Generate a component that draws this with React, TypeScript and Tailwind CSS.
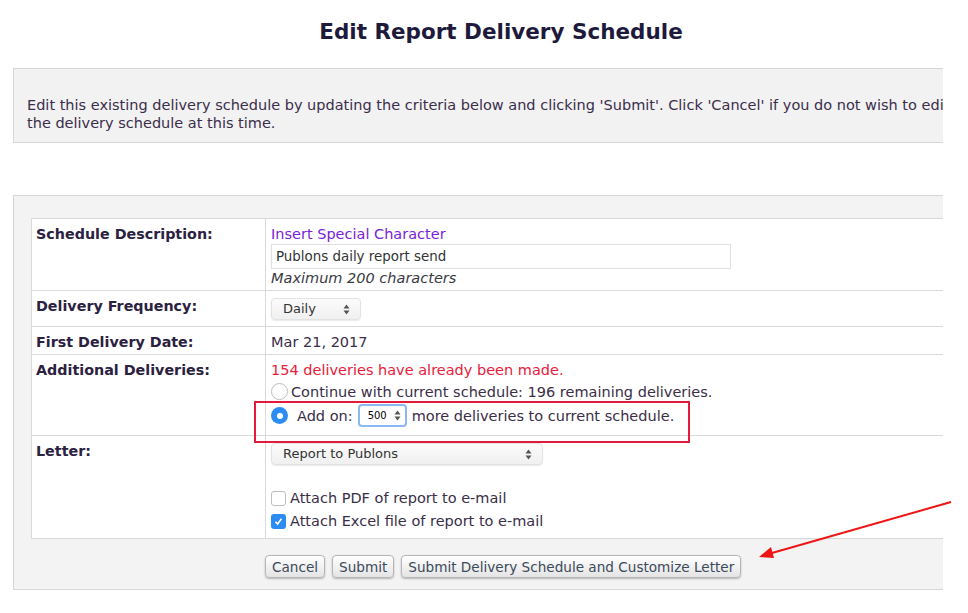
import React from 'react'

const font = { fontFamily: '"DejaVu Sans", Verdana, sans-serif' }

function UpDown() {
  return (
    <svg width="7" height="11" viewBox="0 0 7 11" className="shrink-0">
      <path d="M3.5 0.5 L6.5 4.5 L0.5 4.5 Z" fill="#555" />
      <path d="M3.5 10.5 L6.5 6.5 L0.5 6.5 Z" fill="#555" />
    </svg>
  )
}

function FakeSelect({ label, width }: { label: string; width: string }) {
  return (
    <div
      className={`flex h-[22px] items-center justify-between rounded-[4px] border border-[#e2e2e2] bg-gradient-to-b from-[#fbfbfb] to-[#f0f0f0] pl-[11px] pr-[10px] text-[13px] text-[#333] shadow-[0_1px_1px_rgb(0_0_0_/_0.08)] ${width}`}
    >
      <span>{label}</span>
      <UpDown />
    </div>
  )
}

function Row({
  label,
  children,
  className,
}: {
  label: string
  children: React.ReactNode
  className: string
}) {
  return (
    <div className={`grid grid-cols-[234px_1fr] border-b border-[#d9d9d9] last:border-b-0 ${className}`}>
      <div className="border-r border-[#d9d9d9] pl-[4px] pt-[7px] text-[14.3px] font-bold leading-[16px] text-[#2b2140]">
        {label}
      </div>
      <div className="pl-[5px] pt-[7px] text-[14.5px] leading-[16px] text-[#3a2e48]">{children}</div>
    </div>
  )
}

export default function App() {
  return (
    <div className="relative h-[613px] w-[968px] overflow-hidden bg-white" style={font}>
      <h1 className="w-[1002px] pt-[19px] text-center text-[21.5px] font-bold leading-[26px] text-[#1e1a3c]">
        Edit Report Delivery Schedule
      </h1>

      <div className="ml-[13px] mt-[23px] w-[930px] overflow-hidden">
        <div className="h-[75px] w-[1000px] border border-[#d6d6d6] bg-[#f2f2f2] pl-[13px] pt-[27px] text-[14.5px] leading-[18px] text-[#3b2d4c]">
          <p className="whitespace-nowrap">
            Edit this existing delivery schedule by updating the criteria below and clicking 'Submit'. Click 'Cancel' if you do not wish to edit
          </p>
          <p>the delivery schedule at this time.</p>
        </div>

        <div className="mt-[52px] h-[395px] w-[1000px] border border-[#d6d6d6] bg-[#f3f3f3] pl-[17px] pt-[22px]">
          <div className="border border-[#d9d9d9] bg-white">
            <Row label="Schedule Description:" className="h-[72px]">
              <div className="text-[#7a22d9]">Insert Special Character</div>
              <div className="mt-[2px] flex h-[25px] w-[460px] items-center border border-[#e0e0e0] pl-[4px] text-[13.4px] text-[#333]">
                Publons daily report send
              </div>
              <div className="mt-[1px] italic text-[#3a3a44]">Maximum 200 characters</div>
            </Row>
            <Row label="Delivery Frequency:" className="h-[36px]">
              <FakeSelect label="Daily" width="w-[90px]" />
            </Row>
            <Row label="First Delivery Date:" className="h-[28px]">
              <span>Mar 21, 2017</span>
            </Row>
            <Row label="Additional Deliveries:" className="h-[81px]">
              <div className="text-[#e8203a]">154 deliveries have already been made.</div>
              <div className="mt-[5px] flex items-center gap-[3px]">
                <span className="h-[17px] w-[17px] rounded-full border border-[#bdbdbd] bg-white" />
                <span>Continue with current schedule: 196 remaining deliveries.</span>
              </div>
              <div className="mt-[4px] flex items-center">
                <span className="flex h-[17px] w-[17px] items-center justify-center rounded-full bg-[#2d8cf2]">
                  <span className="h-[6px] w-[6px] rounded-full bg-white" />
                </span>
                <span className="ml-[9px]">Add on:</span>
                <span className="ml-[5px] flex h-[23px] w-[49px] items-center justify-between rounded-[4px] border-2 border-[#8ab8f2] bg-white pl-[8px] pr-[4px] text-[10px] text-black">
                  500
                  <UpDown />
                </span>
                <span className="ml-[5px]">more deliveries to current schedule.</span>
              </div>
            </Row>
            <Row label="Letter:" className="h-[102px]">
              <FakeSelect label="Report to Publons" width="w-[272px]" />
              <div className="mt-[25px] flex items-center gap-[4px]">
                <span className="h-[15px] w-[15px] rounded-[3px] border border-[#bdbdbd] bg-white" />
                <span>Attach PDF of report to e-mail</span>
              </div>
              <div className="mt-[7px] flex items-center gap-[4px]">
                <span className="flex h-[15px] w-[15px] items-center justify-center rounded-[3px] bg-[#2d8cf2]">
                  <svg width="9" height="9" viewBox="0 0 9 9">
                    <path d="M1.5 4.8 L3.6 7 L7.5 1.8" fill="none" stroke="white" strokeWidth="1.6" />
                  </svg>
                </span>
                <span>Attach Excel file of report to e-mail</span>
              </div>
            </Row>
          </div>

          <div className="mt-[16px] flex gap-[7px] pl-[234px] text-[13.6px] text-[#3b4a5c]">
            {['Cancel', 'Submit', 'Submit Delivery Schedule and Customize Letter'].map((b) => (
              <button
                key={b}
                className="h-[23px] rounded-[4px] border border-[#b5b5b5] bg-gradient-to-b from-white to-[#e4e4e4] px-[6px] leading-[20px] shadow-[0_1px_2px_rgb(0_0_0_/_0.25)]"
              >
                {b}
              </button>
            ))}
          </div>
        </div>
      </div>

      {/* annotation box around Add on row */}
      <div className="absolute left-[254px] top-[401px] h-[42px] w-[436px] border-2 border-[#e5193a]" />

      {/* annotation arrow */}
      <svg className="absolute left-0 top-0" width="968" height="613">
        <line x1="951" y1="502" x2="772" y2="553" stroke="#f01515" strokeWidth="2" />
        <path d="M759 557 L771 547 L774 558 Z" fill="#f01515" />
      </svg>
    </div>
  )
}
